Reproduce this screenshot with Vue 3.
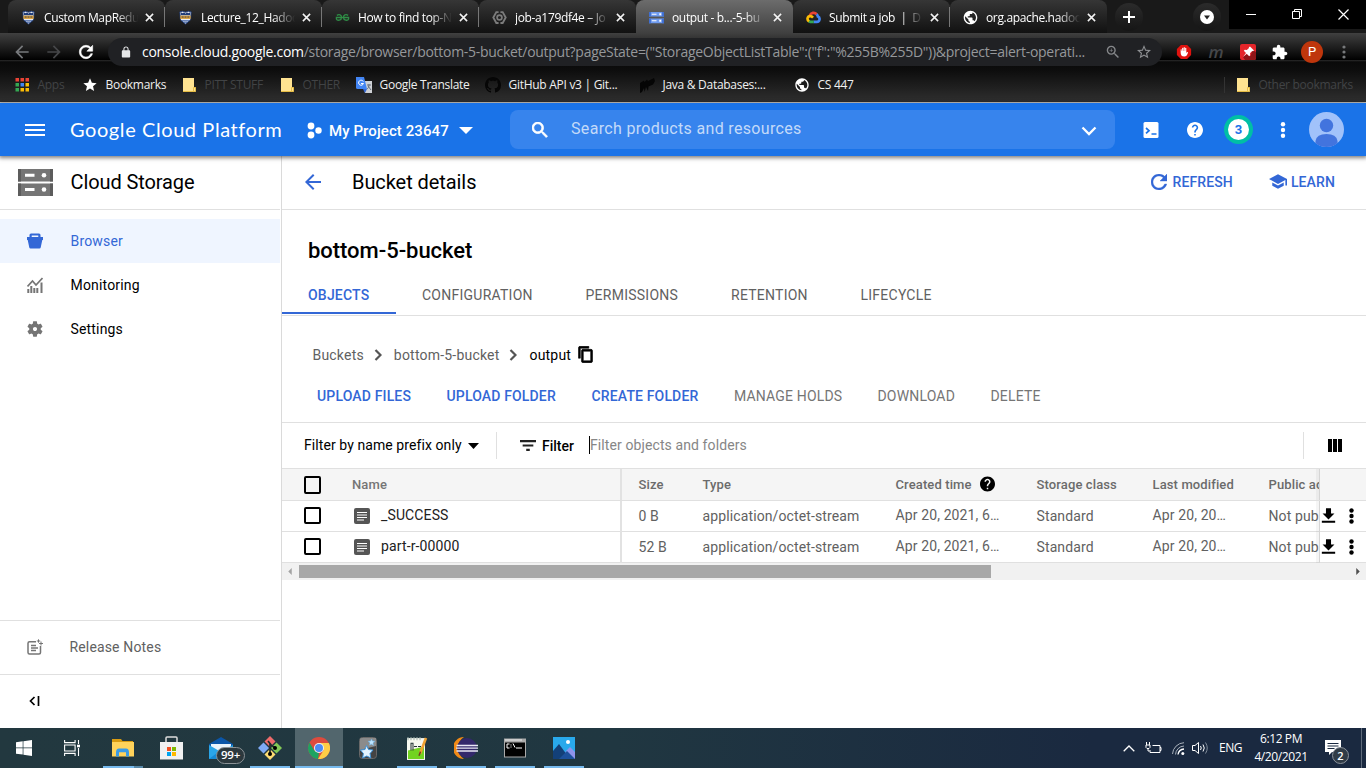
<script setup>
const icons = {
  menu: 'M3 18h18v-2H3v2zm0-5h18v-2H3v2zm0-7v2h18V6H3z',
  search: 'M15.5 14h-.79l-.28-.27C15.41 12.59 16 11.11 16 9.5 16 5.91 13.09 3 9.5 3S3 5.91 3 9.5 5.91 16 9.5 16c1.61 0 3.09-.59 4.23-1.57l.27.28v.79l5 4.99L20.49 19l-4.99-5zm-6 0C7.01 14 5 11.99 5 9.5S7.01 5 9.5 5 14 7.01 14 9.5 11.99 14 9.5 14z',
  zoom: 'M15.5 14h-.79l-.28-.27C15.41 12.59 16 11.11 16 9.5 16 5.91 13.09 3 9.5 3S3 5.91 3 9.5 5.91 16 9.5 16c1.61 0 3.09-.59 4.23-1.57l.27.28v.79l5 4.99L20.49 19l-4.99-5zm-6 0C7.01 14 5 11.99 5 9.5S7.01 5 9.5 5 14 7.01 14 9.5 11.99 14 9.5 14zM12 10h-2v2H9v-2H7V9h2V7h1v2h2v1z',
  help: 'M12 2C6.48 2 2 6.48 2 12s4.48 10 10 10 10-4.48 10-10S17.52 2 12 2zm1 17h-2v-2h2v2zm2.07-7.75l-.9.92C13.45 12.9 13 13.5 13 15h-2v-.5c0-1.1.45-2.1 1.17-2.83l1.24-1.26c.37-.36.59-.86.59-1.41 0-1.1-.9-2-2-2s-2 .9-2 2H8c0-2.21 1.79-4 4-4s4 1.79 4 4c0 .88-.36 1.68-.93 2.25z',
  back: 'M20 11H7.83l5.59-5.59L12 4l-8 8 8 8 1.41-1.41L7.83 13H20v-2z',
  forward: 'M12 4l-1.41 1.41L16.17 11H4v2h12.17l-5.58 5.59L12 20l8-8z',
  refresh: 'M17.65 6.35C16.2 4.9 14.21 4 12 4c-4.42 0-7.99 3.58-7.99 8s3.57 8 7.99 8c3.73 0 6.84-2.55 7.73-6h-2.08c-.82 2.33-3.04 4-5.65 4-3.31 0-6-2.69-6-6s2.69-6 6-6c1.66 0 3.14.69 4.22 1.78L13 11h7V4l-2.35 2.35z',
  school: 'M5 13.18v4L12 21l7-3.82v-4L12 17l-7-3.82zM12 3L1 9l11 6 9-4.91V17h2V9L12 3z',
  settings: 'M19.14 12.94c.04-.3.06-.61.06-.94 0-.32-.02-.64-.07-.94l2.03-1.58c.18-.14.23-.41.12-.61l-1.92-3.32c-.12-.22-.37-.29-.59-.22l-2.39.96c-.5-.38-1.03-.7-1.62-.94l-.36-2.54c-.04-.24-.24-.41-.48-.41h-3.84c-.24 0-.43.17-.47.41l-.36 2.54c-.59.24-1.13.57-1.62.94l-2.39-.96c-.22-.08-.47 0-.59.22L2.74 8.87c-.12.21-.08.47.12.61l2.03 1.58c-.05.3-.09.63-.09.94s.02.64.07.94l-2.03 1.58c-.18.14-.23.41-.12.61l1.92 3.32c.12.22.37.29.59.22l2.39-.96c.5.38 1.03.7 1.62.94l.36 2.54c.05.24.24.41.48.41h3.84c.24 0 .44-.17.47-.41l.36-2.54c.59-.24 1.13-.56 1.62-.94l2.39.96c.22.08.47 0 .59-.22l1.92-3.32c.12-.22.07-.47-.12-.61l-2.01-1.58zM12 14.6c-1.44 0-2.6-1.16-2.6-2.6s1.16-2.6 2.6-2.6 2.6 1.16 2.6 2.6-1.16 2.6-2.6 2.6z',
  filter: 'M10 18h4v-2.400h-4v2.400zM3 6v2.400h18V6H3zm3 7.200h12v-2.400H6v2.400z',
  download: 'M19.500 9.500H15.200V3H8.800v6.500H4.500l7.500 7.500 7.500-7.500zM3.500 18.500v2.500h17v-2.500z',
  copy: 'M16 1H4c-1.1 0-2 .9-2 2v14h2.500V3.500h11.500V1zm3 4H8c-1.1 0-2 .9-2 2v14c0 1.1.9 2 2 2h11c1.1 0 2-.9 2-2V7c0-1.1-.9-2-2-2zm-.5 15.500H8.500V7.500h10z',
  lock: 'M18 8h-1V6c0-2.76-2.24-5-5-5S7 3.24 7 6v2H6c-1.1 0-2 .9-2 2v10c0 1.1.9 2 2 2h12c1.1 0 2-.9 2-2V10c0-1.1-.9-2-2-2zM9 8V6c0-1.66 1.34-3 3-3s3 1.34 3 3v2H9z',
  starOutline: 'M22 9.24l-7.19-.62L12 2 9.19 8.63 2 9.24l5.46 4.73L5.82 21 12 17.27 18.18 21l-1.63-7.03L22 9.24zM12 15.4l-3.76 2.27 1-4.28-3.32-2.88 4.38-.38L12 6.1l1.71 4.04 4.38.38-3.32 2.88 1 4.28L12 15.4z',
  star: 'M12 17.27L18.18 21l-1.64-7.03L22 9.24l-7.19-.61L12 2 9.19 8.63 2 9.24l5.46 4.73L5.82 21z',
  puzzle: 'M20.5 11H19V7c0-1.1-.9-2-2-2h-4V3.5C13 2.12 11.88 1 10.5 1S8 2.12 8 3.5V5H4c-1.1 0-1.99.9-1.99 2v3.8H3.5c1.49 0 2.7 1.21 2.7 2.7s-1.21 2.7-2.7 2.7H2V20c0 1.1.9 2 2 2h3.8v-1.5c0-1.49 1.21-2.7 2.7-2.7 1.49 0 2.7 1.21 2.7 2.7V22H17c1.1 0 2-.9 2-2v-4h1.5c1.38 0 2.5-1.12 2.5-2.5S21.88 11 20.5 11z',
  globe: 'M12 2C6.48 2 2 6.48 2 12s4.48 10 10 10 10-4.48 10-10S17.52 2 12 2zm-1 17.93c-3.95-.49-7-3.85-7-7.93 0-.62.08-1.21.21-1.79L9 15v1c0 1.1.9 2 2 2v1.93zm6.9-2.54c-.26-.81-1-1.39-1.9-1.39h-1v-3c0-.55-.45-1-1-1H8v-2h2c.55 0 1-.45 1-1V7h2c1.1 0 2-.9 2-2v-.41c2.93 1.19 5 4.06 5 7.41 0 2.08-.8 3.97-2.1 5.39z',
  github: 'M12 0C5.37 0 0 5.37 0 12c0 5.31 3.435 9.795 8.205 11.385.6.105.825-.255.825-.57 0-.285-.015-1.23-.015-2.235-3.015.555-3.795-.735-4.035-1.41-.135-.345-.72-1.41-1.23-1.695-.42-.225-1.02-.78-.015-.795.945-.015 1.62.87 1.845 1.23 1.08 1.815 2.805 1.305 3.495.99.105-.78.42-1.305.765-1.605-2.67-.3-5.46-1.335-5.46-5.925 0-1.305.465-2.385 1.23-3.225-.12-.3-.54-1.53.12-3.18 0 0 1.005-.315 3.3 1.23.96-.27 1.98-.405 3-.405s2.04.135 3 .405c2.295-1.56 3.3-1.23 3.3-1.23.66 1.65.24 2.88.12 3.18.765.84 1.23 1.905 1.23 3.225 0 4.605-2.805 5.625-5.475 5.925.435.375.81 1.095.81 2.22 0 1.605-.015 2.895-.015 3.3 0 .315.225.69.825.57A12.02 12.02 0 0024 12c0-6.63-5.37-12-12-12z',
}

const tabs = [
  { icon: 'shield', title: 'Custom MapRedu' },
  { icon: 'shield', title: 'Lecture_12_Hadoo' },
  { icon: 'geeks', title: 'How to find top-N' },
  { icon: 'hex', title: 'job-a179df4e – Jo' },
  { icon: 'storage', title: 'output - b...-5-bu', active: true },
  { icon: 'cloud', title: 'Submit a job  |  D' },
  { icon: 'globe', title: 'org.apache.hadoo' },
]

const bookmarks = [
  { icon: 'apps', label: 'Apps', dim: true },
  { icon: 'star', label: 'Bookmarks' },
  { icon: 'folder', label: 'PITT STUFF', dim: true },
  { icon: 'folder', label: 'OTHER', dim: true },
  { icon: 'translate', label: 'Google Translate' },
  { icon: 'github', label: 'GitHub API v3 | Git...' },
  { icon: 'java', label: 'Java & Databases:...' },
  { icon: 'globe', label: 'CS 447' },
]

const appGrid = ['#ea4335', '#ea4335', '#ea4335', '#34a853', '#4285f4', '#fbbc05', '#34a853', '#fbbc05', '#fbbc05']
const sections = ['OBJECTS', 'CONFIGURATION', 'PERMISSIONS', 'RETENTION', 'LIFECYCLE']
const actions = [
  { label: 'UPLOAD FILES', on: true },
  { label: 'UPLOAD FOLDER', on: true },
  { label: 'CREATE FOLDER', on: true },
  { label: 'MANAGE HOLDS' },
  { label: 'DOWNLOAD' },
  { label: 'DELETE' },
]
const rows = [
  { name: '_SUCCESS', size: '0 B' },
  { name: 'part-r-00000', size: '52 B' },
]
</script>

<template>
  <div class="screen">
    <div class="tabstrip">
      <div v-for="(t, i) in tabs" :key="i" class="tab" :class="{ active: t.active, split: [0, 1, 2, 5].includes(i) }">
        <svg v-if="t.icon === 'shield'" class="fav" viewBox="0 0 16 16">
          <path d="M2 2l3-.7L8 2.3l3-1L14 2l-.6 8.5L8 15l-5.400-4.500z" fill="#e9ecf2" stroke="#223f7c" />
          <path d="M3 2.500l2 1 1.500-1L8 4l1.500-1.500 1.500 1 2-1-.2 3H3.200z" fill="#1f3c79" />
          <path d="M2.500 6h11v3.500h-11z" fill="#d79c35" /><path d="M4 7.500h2M7 7.500h2M10 7.500h2" stroke="#333c59" />
          <path d="M4 11.500h8M6 13h4" stroke="#2c5097" />
        </svg>
        <svg v-else-if="t.icon === 'geeks'" class="fav" viewBox="0 0 16 16" fill="none" stroke="#2f8d46" stroke-width="1.4">
          <path d="M2 5.700c2.500-1.800 5-.5 5 2.300 0 3-4.500 4-5.500 1.500V8h13v1.500C13.500 12 9 11 9 8c0-2.800 2.500-4.100 5-2.300" />
        </svg>
        <svg v-else-if="t.icon === 'hex'" class="fav" viewBox="0 0 16 16" fill="none" stroke="#7c7c7c">
          <path d="M7 2.200H4.600L1.400 8l3.200 5.800H7M9 2.200h2.400L14.600 8l-3.200 5.800H9" stroke-width="2" /><circle cx="8" cy="8" r="2.6" stroke-width="1.8" />
        </svg>
        <svg v-else-if="t.icon === 'storage'" class="fav" viewBox="0 0 16 16">
          <path fill="#6f9bef" d="M0 2h16v5H0zM0 9h16v5H0z" /><path fill="#3f6fd2" d="M0 2h2v5H0zM14 2h2v5h-2zM0 9h2v5H0zM14 9h2v5h-2z" />
          <path fill="#fff" d="M3 4h5v1H3zM3 11h5v1H3zM11 3.500h2v2h-2zM11 10.500h2v2h-2z" />
        </svg>
        <svg v-else-if="t.icon === 'cloud'" class="fav" viewBox="0 0 16 16" fill="none" stroke-width="2.8">
          <path stroke="#ea4335" d="M4 6a4.300 4.300 0 0 1 7.500-1.300" /><path stroke="#4285f4" d="M11.300 4.500C12.600 5.700 12.700 7 12.700 7c2.700 1 2.300 5.600-1.200 5.600H8" />
          <path stroke="#34a853" d="M8.200 12.600H4.500L2.800 12" /><path stroke="#fbbc05" d="M3.200 12.200C.5 10.300 1.500 6.500 4.500 6.500c1.500 0 2.300.8 3 1.600" />
        </svg>
        <svg v-else class="fav" viewBox="1 1 22 22" fill="#fff"><path :d="icons.globe" /></svg>
        <span class="tab-title">{{ t.title }}</span>
        <svg class="close" viewBox="0 0 10 10"><path d="M1 1l8 8M9 1L1 9" stroke="#f4f4f4" stroke-width="1.7" /></svg>
      </div>
      <div class="disc plus"><svg viewBox="0 0 12 12"><path d="M6 0v12M0 6h12" stroke="#fff" stroke-width="2" /></svg></div>
      <div class="disc chevron"><svg viewBox="0 0 14 14"><circle cx="7" cy="7" r="7" fill="#fff" /><path d="M4 5.500h6L7 9.500z" fill="#222" /></svg></div>
      <div class="winbtns">
        <svg viewBox="0 0 45 29"><path d="M17 14.500h10" stroke="#fff" /></svg>
        <svg viewBox="0 0 45 29" fill="none" stroke="#fff"><path d="M17.500 11.500h7v7h-7zM19.500 11V9.500h7v7H25" /></svg>
        <svg viewBox="0 0 45 29"><path d="M17.500 9.500l10 10M27.500 9.500l-10 10" stroke="#fff" stroke-width="1.2" /></svg>
      </div>
    </div>

    <div class="toolbar">
      <svg class="nav-ic" viewBox="0 0 24 24" fill="#77797c"><path :d="icons.back" /></svg>
      <svg class="nav-ic" viewBox="0 0 24 24" fill="#464749"><path :d="icons.forward" /></svg>
      <svg class="nav-ic" viewBox="0 0 24 24" fill="#fff" stroke="#fff" stroke-width=".7"><path :d="icons.refresh" /></svg>
      <div class="omnibox">
        <svg class="lock" viewBox="3 0 18 23" fill="#e5e6e8"><path :d="icons.lock" /></svg>
        <div class="url"><b>console.cloud.google.com</b>/storage/browser/bottom-5-bucket/output?pageState=("StorageObjectListTable":("f":"%255B%255D"))&amp;project=alert-operati...</div>
        <svg class="o-ic" viewBox="2 2 20 20" fill="#85878a"><path :d="icons.zoom" /></svg>
        <svg class="o-ic" viewBox="2 2 20 20" fill="#8e9093"><path :d="icons.starOutline" /></svg>
      </div>
      <div class="exts">
        <svg viewBox="0 0 18 18"><path d="M5.500 1h7L17 5.500v7L12.500 17h-7L1 12.500v-7z" fill="#e0120e" /><path d="M5.200 9V6.200q.7-.8 1.200 0V8h.5V4.500q.7-.8 1.300 0V8h.4V3.800q.7-.8 1.300 0V8h.4V4.600q.8-.7 1.300 0v5.400q1-1.500 2-.8c-.7 2.800-2 5-4.300 5-3 0-4.100-2-4.100-5.200z" fill="#fff" /></svg>
        <span class="m-ext">m</span>
        <svg viewBox="0 0 16 16"><rect width="16" height="16" rx="2" fill="#e5252a" /><path d="M3 13l4-3 3.500 2 2-6L16 8v6q0 2-2 2H5z" fill="#8f1518" /><path d="M10 2.500l4 4-1 .7-.8-.3-2.200 2.300.2 2-1 1-2.500-2.500L3 13l3-4L3.800 6.800l1-1 2 .2L9 4l-.2-.8z" fill="#fff" /></svg>
        <svg viewBox="1 0 23 23" fill="#fff"><path :d="icons.puzzle" /></svg>
        <span class="avatar-p">P</span>
        <svg class="dots3" viewBox="0 0 4 14" fill="#77797b"><circle cx="2" cy="2" r="1.6" /><circle cx="2" cy="7" r="1.6" /><circle cx="2" cy="12" r="1.6" /></svg>
      </div>
    </div>

    <div class="bookmarks">
      <div v-for="b in bookmarks" :key="b.label" class="bm" :class="{ dim: b.dim }">
        <svg v-if="b.icon === 'apps'" class="bi" viewBox="0 0 16 16"><rect v-for="(c, i) in appGrid" :key="i" :x="1.5 + (i % 3) * 5" :y="1 + Math.floor(i / 3) * 5" width="3.5" height="3.5" :fill="c" /></svg>
        <svg v-else-if="b.icon === 'folder'" class="bi" viewBox="0 0 16 16"><path d="M2 1h11v9h1.500v5H2z" fill="#ffe391" /><path d="M12.500 10.500v4h2v-4zM2 14.500h12" stroke="#e6bd46" fill="none" /></svg>
        <svg v-else-if="b.icon === 'translate'" class="bi" viewBox="0 0 16 16"><path d="M7 4h9v12H9z" fill="#cfd2d6" /><path d="M0 0h8l3 12H1.500Q0 12 0 10.500z" fill="#4285f4" /><path d="M7 12h4l-2 4z" fill="#3367d6" /><path d="M7.300 4.500a2.500 2.500 0 1 0 .2 2H5" stroke="#fff" fill="none" /><path d="M11 8h4M13 7v1c0 2-1 3.500-2 4M12 9l3 4" stroke="#666f7a" fill="none" /></svg>
        <svg v-else-if="b.icon === 'java'" class="bi" viewBox="0 0 16 16"><path d="M1 6l4-2.500.5 1.500L8 2.500 9 4l6-3 1 3-2 3.500-4.500 2L9 14l-2-4-1.500 5L5 11l-2 4-2 1z" fill="#050505" /></svg>
        <svg v-else class="bi" viewBox="0 0 24 24" :fill="b.icon === 'github' ? '#060606' : '#fff'"><path :d="icons[b.icon]" /></svg>
        <span>{{ b.label }}</span>
      </div>
      <div class="bm dim other">
        <svg class="bi" viewBox="0 0 16 16"><path d="M2 1h11v9h1.500v5H2z" fill="#ffe391" /><path d="M12.500 10.500v4h2v-4zM2 14.500h12" stroke="#e6bd46" fill="none" /></svg>
        <span>Other bookmarks</span>
      </div>
    </div>

    <header class="gcp">
      <svg class="burger" viewBox="3 5 18 14" preserveAspectRatio="none" fill="#fff"><path :d="icons.menu" /></svg>
      <div class="logo">Google <span>Cloud Platform</span></div>
      <svg class="proj-ic" viewBox="0 0 15 17" fill="#fff"><circle cx="4" cy="4" r="3.4" /><circle cx="11.500" cy="8.500" r="3.2" /><circle cx="4" cy="13" r="3.4" /></svg>
      <div class="project">My Project 23647</div>
      <svg class="caret" viewBox="0 0 14 7" fill="#fff"><path d="M0 0h14L7 7z" /></svg>
      <div class="search">
        <svg viewBox="3 3 18 18" fill="#fff" stroke="#fff" stroke-width=".8"><path :d="icons.search" /></svg>
        <span>Search products and resources</span>
        <svg viewBox="0 0 16 10" class="down" fill="none" stroke="#fff" stroke-width="2.3"><path d="M1.500 1.500L8 8l6.500-6.500" /></svg>
      </div>
      <div class="gcp-tools">
        <svg viewBox="0 0 15 16"><rect width="15" height="16" rx="1.5" fill="#fff" /><path d="M2.500 6l3 2.700-3 2.700M8 12h5" fill="none" stroke="#1a73e8" stroke-width="1.7" /></svg>
        <svg viewBox="2 2 20 20" fill="#fff"><path :d="icons.help" /></svg>
        <span class="count">3</span>
        <svg viewBox="0 0 16 16" fill="#fff"><circle cx="8" cy="2.200" r="2.2" /><circle cx="8" cy="8" r="2.2" /><circle cx="8" cy="13.800" r="2.2" /></svg>
        <svg class="user" viewBox="0 0 35 35"><circle cx="17.500" cy="17.500" r="17.500" fill="#a1c2fa" /><circle cx="17.500" cy="13.500" r="6.700" fill="#4274de" /><path d="M6.500 31v-2q1-7 11-7t11 7v2q-4 4-11 4t-11-4z" fill="#4274de" /></svg>
      </div>
    </header>

    <div class="body">
      <aside>
        <div class="product">
          <svg viewBox="0 0 35 27"><path fill="#757575" d="M0 0h35v12.500H0zM0 14.500h35V27H0z" /><path fill="#5c5c5c" d="M0 0h3v12.500H0zM32 0h3v12.500h-3zM0 14.500h3V27H0zM32 14.500h3V27h-3z" /><path fill="#fff" d="M7 4.700h9.500v3H7zM7 19h9.500v3H7z" /><circle cx="26" cy="6.200" r="2.3" fill="#fff" /><circle cx="26" cy="20.500" r="2.3" fill="#fff" /></svg>
          <span>Cloud Storage</span>
        </div>
        <nav>
          <div class="item sel"><svg viewBox="0 0 16 16" fill="#3367d6"><path fill-rule="evenodd" d="M0 4h2.500V2q0-1.500 1.500-1.500h8q1.500 0 1.500 1.500v2H16v3h-.7l-1.600 7.500q-.2 1-1.200 1h-9q-1 0-1.200-1L.7 7H0zm4.700 0h6.600V2.500H4.700z" /></svg>Browser</div>
          <div class="item"><svg viewBox="0 0 16 16"><path d="M1.300 16v-4M4.300 16V9M7.300 16v-5M10.300 16v-5M14.500 16V5.500" stroke="#757575" stroke-width="2" /><path d="M.5 9.500L5.500 4l3.500 4 6.500-7" stroke="#757575" stroke-width="1.7" fill="none" /></svg>Monitoring</div>
          <div class="item"><svg viewBox="2 2 20 20" fill="#757575"><path :d="icons.settings" /></svg>Settings</div>
        </nav>
        <div class="release">
          <svg viewBox="0 0 16 16" fill="none" stroke="#757575"><path d="M9 2.700H2.500q-1.500 0-1.500 1.500v9.300Q1 15 2.500 15H12q1.500 0 1.500-1.500V7" stroke-width="1.5" /><path d="M4 6.500h5M4 9h7M4 11.500h5" stroke-width="1.3" /><path d="M11.500.3v3.400M9.800 2h3.400M14 2.500v4M12 4.500h4" /></svg>
          <span>Release Notes</span>
        </div>
        <div class="collapse"><svg viewBox="0 0 11 10" fill="none" stroke="#000" stroke-width="1.7"><path d="M5.500 1L1.500 5l4 4M9.500 0v10" /></svg></div>
      </aside>

      <main>
        <div class="pagehead">
          <svg class="back" viewBox="3 3 18 18" fill="#3367d6"><path :d="icons.back" /></svg>
          <span class="ptitle">Bucket details</span>
          <div class="head-act"><svg viewBox="4 4 16 16" fill="#3367d6" stroke="#3367d6" stroke-width=".4"><path :d="icons.refresh" /></svg>REFRESH</div>
          <div class="head-act learn"><svg viewBox="1 3 22 18" fill="#3367d6"><path :d="icons.school" /></svg>LEARN</div>
        </div>
        <h1>bottom-5-bucket</h1>
        <div class="sections"><div v-for="(s, i) in sections" :key="s" :class="{ cur: i === 0 }">{{ s }}</div></div>
        <div class="crumbs">
          <span>Buckets</span>
          <svg class="sep" viewBox="0 0 8 12" fill="none" stroke="#555" stroke-width="2.2"><path d="M1.500 1l5 5-5 5" /></svg>
          <span>bottom-5-bucket</span>
          <svg class="sep" viewBox="0 0 8 12" fill="none" stroke="#555" stroke-width="2.2"><path d="M1.500 1l5 5-5 5" /></svg>
          <span class="here">output</span>
          <svg class="copy" viewBox="1.500 .5 20 23" stroke="#000" stroke-width=".8"><path :d="icons.copy" /></svg>
        </div>
        <div class="actions"><span v-for="a in actions" :key="a.label" :class="{ on: a.on }">{{ a.label }}</span></div>
        <div class="filterbar">
          <span class="prefix">Filter by name prefix only</span>
          <svg class="fcaret" viewBox="0 0 11 6"><path d="M0 0h11L5.500 6z" /></svg>
          <i class="rule"></i>
          <svg class="ficon" viewBox="3 6 18 12" preserveAspectRatio="none" fill="#222"><path :d="icons.filter" /></svg>
          <b>Filter</b>
          <span class="ph">Filter objects and folders</span>
          <i class="rule end"></i>
          <svg class="cols" viewBox="0 0 14 13"><path d="M0 0h4v13H0zM5 0h4v13H5zM10 0h4v13h-4z" /></svg>
        </div>
        <div class="table">
          <div class="tr th">
            <div class="name"><i class="cb"></i><span class="hname">Name</span></div>
            <div>Size</div><div>Type</div>
            <div>Created time<svg class="q" viewBox="2 2 20 20"><path :d="icons.help" /></svg></div>
            <div>Storage class</div><div>Last modified</div><div class="pub">Public ac</div><div class="acts"></div>
          </div>
          <div v-for="r in rows" :key="r.name" class="tr">
            <div class="name"><i class="cb"></i>
              <svg class="doc" viewBox="0 0 16 16"><rect width="16" height="16" rx="2" fill="#555" /><path d="M3 4.500h10M3 7h10M3 9.500h10M3 12h7" stroke="#fff" /></svg>
              <span class="fname">{{ r.name }}</span></div>
            <div>{{ r.size }}</div><div>application/octet-stream</div><div class="date">Apr 20, 2021, 6…</div><div>Standard</div><div class="date">Apr 20, 20…</div><div class="pub">Not pub</div>
            <div class="acts"><svg class="dl" viewBox="3 3 18 18"><path :d="icons.download" /></svg><svg class="more" viewBox="0 0 5 16"><circle cx="2.500" cy="2.500" r="2.2" /><circle cx="2.500" cy="8" r="2.2" /><circle cx="2.500" cy="13.500" r="2.2" /></svg></div>
          </div>
        </div>
        <div class="hscroll">
          <svg viewBox="0 0 4 8"><path d="M4 0v8L0 4z" fill="#a3a3a3" /></svg>
          <div class="thumb"></div>
          <svg viewBox="0 0 4 8"><path d="M0 0v8l4-4z" fill="#505050" /></svg>
        </div>
      </main>
    </div>

    <footer class="taskbar">
      <div class="tk win"><svg viewBox="0 0 16 16" fill="#fff"><path d="M0 2.300L6.700 1.300v6.300H0zM7.400 1.200L16 0v7.600H7.400zM0 8.300h6.700v6.300L0 13.700zM7.400 8.300H16V16l-8.600-1.200z" /></svg></div>
      <div class="tk view"><svg viewBox="0 0 16 16" fill="none" stroke="#fff" stroke-width="1.1"><path d="M.6 0v2.600h10.500V0M.6 5h10.500v6H.6zM.6 16v-2.600h10.500V16M14.500 0v4M14.500 8v8" /><path d="M13 6h3" stroke-width="2.6" /></svg></div>
      <div class="tk run multi"><svg class="w22" viewBox="0 0 22 18"><path d="M0 0h9l1.500 2H21v3H0z" fill="#d99c12" /><path d="M0 3h22v14.500H0z" fill="#ffd35b" /><path d="M4 17.500v-4q0-4 3-4h7q3 0 3 4v4h-3v-4.300H7v4.300z" fill="#3a9be6" /></svg></div>
      <div class="tk"><svg class="w23" viewBox="0 0 23 24"><path d="M6 7V2q0-1 1-1h9q1 0 1 1v5" fill="none" stroke="#ddd" stroke-width="1.5" /><path d="M0 6h23v17.500H0z" fill="#f1f1f1" /><path d="M7 11h4v4H7z" fill="#f25022" /><path d="M12 11h4v4h-4z" fill="#7fba00" /><path d="M7 16h4v4H7z" fill="#00a4ef" /><path d="M12 16h4v4h-4z" fill="#ffb900" /></svg></div>
      <div class="tk"><svg class="w24" viewBox="0 0 24 22"><path d="M0 7L12 0l12 7v3H0z" fill="#0b56a8" /><path d="M2 7h20v8H2z" fill="#e9f3fb" /><path d="M0 8l12 7 12-7v14H0z" fill="#2aa5e8" /><path d="M0 22l12-9 12 9z" fill="#1689d3" /></svg><span class="badge">99+</span></div>
      <div class="tk run"><svg class="w24" viewBox="0 0 24 24"><path d="M12 0l5.500 5.500L12 11 6.500 5.500z" fill="#ee6b6b" /><path d="M5.500 6.500L11 12l-5.500 5.500L0 12z" fill="#7eaaf5" /><path d="M18.500 6.500L24 12l-5.500 5.500L13 12z" fill="#83c957" /><path d="M12 13l5.500 5.500L12 24l-5.500-5.500z" fill="#ffdc72" /><path d="M10 5l4 5M12 7v11M14 10l4 2" stroke="#222b2b" stroke-width="1.7" /><circle cx="12" cy="18" r="2" /><circle cx="17" cy="12" r="2" /></svg></div>
      <div class="tk run hot"><svg class="w22" viewBox="0 0 22 22"><circle cx="11" cy="11" r="11" fill="#dd4b3e" /><path d="M1.500 5.500L6.300 13.500 11 16l-1 6A11 11 0 0 1 1.500 5.500z" fill="#1da362" /><path d="M11 6h9.800A11 11 0 0 1 10 22l5.500-8.500z" fill="#ffcd46" /><circle cx="11" cy="11" r="5" fill="#f1f1f1" /><circle cx="11" cy="11" r="4" fill="#4c8bf5" /></svg></div>
      <div class="tk"><svg class="w18" viewBox="0 0 18 22"><rect x=".5" y=".5" width="17" height="21" rx="3" fill="#444" stroke="#686868" /><path d="M1 2q0-1 2-1h14v8L1 13z" fill="#8b8b8b" /><path d="M7.500 8.500l2 4 4.500.5-3 3.500.8 4.500-4-2-4.200 2 .8-4.500-3-3.500 4.600-.5z" fill="#e4f4ff" stroke="#3f94da" /><path d="M12.500 2l1 2 2.500.3-2 1.700.5 2.500-2-1.300-2.200 1L11 6 9 4.300l2.500-.2z" fill="#bfe5ff" stroke="#64aee4" stroke-width=".5" /></svg></div>
      <div class="tk run"><svg class="w22 npp" viewBox="0 0 22 24" preserveAspectRatio="none"><path d="M1 2h18v21H1z" fill="#f6f8f0" /><path d="M2 14L18 10v12H2z" fill="#72d321" /><path d="M2 1v3M5 1v3M8 1v3M11 1v3M14 1v3" stroke="#9eb0aa" /><path d="M5 14V7h2v7M8 10h3M12 10h3" stroke="#233" fill="none" /><path d="M20 2l-6 15" stroke="#f0a132" stroke-width="2.6" /><path d="M14.500 15l-1.500 4" stroke="#70451d" stroke-width="1.5" /></svg></div>
      <div class="tk run"><svg class="w24" viewBox="0 0 24 22"><path d="M10 0A11 11 0 0 0 10 22 13 13 0 0 1 10 0z" fill="#f28a16" /><circle cx="13" cy="11" r="10" fill="#33286b" /><path d="M2.500 8.500H24M2 11.200h22M2.500 14H24" stroke="#e9e7f5" stroke-width="1.3" /></svg></div>
      <div class="tk run"><svg class="w22" viewBox="0 0 22 19"><path d="M0 0h22v19H0z" fill="#aaa" /><path d="M1 4h20v14H1z" fill="#020202" /><path d="M5.500 5.500H3v4h2.500M7 6v1M7 8v1M9 5l2 4M12 9.500h6" stroke="#fff" fill="none" /><path d="M1 1.500h17" stroke="#eee" /></svg></div>
      <div class="tk run"><svg class="w22" viewBox="0 0 22 22"><path d="M0 0h22v22H0z" fill="#29a9ec" /><path d="M13 14l4-4 5 5v7H9z" fill="#8f93eb" /><path d="M0 14l6-7 11 15H0z" fill="#134078" /><path d="M6 22l8-8 8 8z" fill="#1d519c" /><circle cx="15" cy="5" r="2" fill="#fff" /></svg></div>
      <div class="tray">
        <svg class="t1" viewBox="0 0 12 7" fill="none" stroke="#fff" stroke-width="1.3"><path d="M.7 6.300L6 1l5.300 5.300" /></svg>
        <svg class="t2" viewBox="0 0 16 13" fill="none" stroke="#fff"><path d="M7 3.500h7.500v7H4.500V8M14.500 5.500h1v3h-1M1 0v3M4 0v3M.5 3h4v2.500l-1 1h-2l-1-1zM2.500 6.500V9H4" /></svg>
        <svg class="t3" viewBox="0 0 13 13" fill="none"><path d="M.5 12A12 12 0 0 1 12 .7M3.500 12.500A9 9 0 0 1 12 4" stroke="#a9b1bb" /><path d="M6 12.500A6.500 6.500 0 0 1 12 7" stroke="#fff" stroke-width="1.3" /><circle cx="10.800" cy="11.500" r="1.5" fill="#fff" /></svg>
        <svg class="t4" viewBox="0 0 17 14" fill="none" stroke="#fff"><path d="M.5 4.500H3L6.500 1.500v11L3 9.500H.5zM8.500 5q1.500 2 0 4M11 3.500q2.500 3.500 0 7" /><path d="M13.500 1.500q3.500 5.500 0 11" stroke="#828d9b" /></svg>
        <span class="lang">ENG</span>
        <div class="clock"><div>6:12 PM</div><div>4/20/2021</div></div>
        <div class="notify"><svg viewBox="0 0 16 16"><path d="M0 0h16v12H7l-3 3v-3H0z" fill="#fff" /><path d="M2.500 3.500h11M2.500 6h11M2.500 8.500h7" stroke="#1b2a41" /></svg><span>2</span></div>
      </div>
    </footer>
  </div>
</template>

<style>
body { margin: 0; overflow: hidden; }
</style>

<style scoped>
* { box-sizing: border-box; }
svg { display: block; flex: none; }
.screen { width: 1366px; height: 768px; display: flex; flex-direction: column; overflow: hidden; font-family: Roboto, sans-serif; font-size: 14px; color: #000; background: #fff; white-space: nowrap; }
.tabstrip, .toolbar, .bookmarks, .taskbar { font-family: "Open Sans", "Noto Sans", sans-serif; }

.tabstrip { height: 33px; flex: none; display: flex; background: #191919; padding-left: 8px; }
.tab { width: 157px; height: 33px; flex: none; display: flex; align-items: center; padding: 1px 0 0 13px; background: linear-gradient(#363636, #111); border-radius: 8px 8px 0 0; position: relative; color: #fff; }
.tab.active { background: linear-gradient(#6c6c6c, #404040); }
.tab.split::after { content: ""; position: absolute; right: 0; top: 7px; width: 1px; height: 20px; background: #777; }
.fav { width: 15px; height: 15px; }
.tab-title { width: 96px; margin-left: 8px; font-size: 12px; letter-spacing: -.35px; white-space: pre; -webkit-mask-image: linear-gradient(90deg, #000 75%, transparent 98%); mask-image: linear-gradient(90deg, #000 75%, transparent 98%); }
.close { width: 9px; height: 9px; margin-left: 5px; }
.disc { width: 28px; height: 28px; margin-top: 3px; border-radius: 50%; background: linear-gradient(#2b2b2b, #151515); display: flex; align-items: center; justify-content: center; }
.plus { margin-left: 8px; }
.plus svg { width: 12px; height: 12px; }
.chevron { margin-left: 50px; }
.chevron svg { width: 14px; height: 14px; }
.winbtns { display: flex; height: 29px; margin-left: auto; background: #000; gap: 1px; }
.winbtns svg { width: 45px; height: 29px; }

.toolbar { height: 37px; flex: none; display: flex; align-items: center; padding-left: 12px; background: linear-gradient(#404040 0, #000 27px, #2b2b2b 27px, #090909 29px, #0d0d0d 37px); }
.nav-ic { width: 20px; height: 20px; margin: 0 12px 0 0; }
.omnibox { width: 1054px; height: 28px; margin: 5px 0 4px 0; border-radius: 14px; background: #202124; display: flex; align-items: center; padding-left: 13px; }
.exts { display: grid; grid-template-columns: repeat(6, 32px); align-items: center; justify-items: center; margin-left: 6px; }
.exts svg { width: 16px; height: 16px; }
.lock { width: 10px; height: 12px; }
.url { width: 946px; margin-left: 11px; margin-top: -2px; font-size: 14px; letter-spacing: -.285px; color: #96989b; }
.url b { font-weight: 400; color: #fff; }
.o-ic { width: 14px; height: 14px; margin-left: 17.5px; }
.m-ext { font-size: 17px; line-height: 20px; font-style: italic; font-weight: 600; color: #45474a; }
.avatar-p { width: 22px; height: 22px; border-radius: 50%; background: #bf360c; color: #fff; font: 13px/22px Roboto, sans-serif; text-align: center; }
.exts .dots3 { width: 4px; height: 14px; }

.bookmarks { height: 33px; flex: none; display: grid; grid-template-columns: 68px 99px 98px 77px 129px 154px 155px 430px 135px; align-items: center; padding: 0 0 4px 13.5px; background: linear-gradient(#0d0d0d, #2f2f2f 32px, #d5d2cd 32px); color: #f0f0f0; font-size: 12px; }
.bm { display: flex; align-items: center; gap: 8px; height: 26px; letter-spacing: -.28px; }
.bm span { margin-top: -1px; }
.bm.dim { color: #414345; }
.bi { width: 16px; height: 16px; }
.other { height: 16px; border-left: 1px solid #333; padding-left: 10px; }

.gcp { height: 53px; flex: none; background: #1a73e8; display: flex; align-items: center; padding-left: 25px; color: #fff; position: relative; box-shadow: 0 1px 4px 1px rgba(0, 0, 0, .5); z-index: 2; }
.burger { width: 20px; height: 14px; }
.logo { width: 212px; margin-left: 25px; margin-top: -2px; font: 20px/28px Lato, sans-serif; letter-spacing: .58px; }
.proj-ic { width: 15px; height: 17px; margin-left: 25px; margin-top: 1px; }
.project { width: 121px; margin-left: 7px; margin-top: 2px; font-size: 15px; font-weight: 500; letter-spacing: .09px; }
.caret { width: 14px; height: 7px; margin-left: 9px; margin-top: 2px; }
.search { width: 605px; height: 39px; margin-left: 37px; border-radius: 8px; background: #3784ed; display: flex; align-items: center; padding-left: 22px; color: #c3daf9; font-size: 16px; }
.search svg { width: 16px; height: 16px; }
.search span { margin-left: 23px; margin-top: -3px; letter-spacing: .33px; font-weight: 450; }
.search .down { height: 10px; margin-left: auto; margin-right: 18px; margin-top: 3px; }
.gcp-tools { display: grid; grid-template-columns: repeat(4, 44px) 44px; align-items: center; justify-items: center; margin-left: 13.5px; }
.gcp-tools svg { width: 16px; height: 16px; }
.gcp-tools .user { width: 35px; height: 35px; }
.count { width: 29px; height: 29px; border: 4px solid #00bfa5; border-radius: 50%; background: #fff; color: #1a73e8; font-size: 13px; font-weight: 700; line-height: 22px; text-align: center; }

.body { flex: 1; display: flex; min-height: 0; }
aside { width: 282px; flex: none; border-right: 1px solid #dadada; display: flex; flex-direction: column; padding-right: 1px; }
.product { height: 54px; border-bottom: 1px solid #e0e0e0; display: flex; align-items: center; padding-left: 18px; font-size: 20px; }
.product svg { width: 35px; height: 27px; }
.product span { margin-left: 17.5px; margin-top: -2px; letter-spacing: -.1px; }
nav { flex: 1; padding-top: 9px; }
.item { height: 44px; display: flex; align-items: center; padding-left: 27px; letter-spacing: .17px; }
.item svg { width: 16px; height: 16px; margin-right: 27.5px; }
.item.sel { background: #eff5ff; color: #3367d6; }
.release { height: 55px; border: solid #e0e0e0; border-width: 1px 0; display: flex; align-items: center; padding: 0 0 1px 27px; color: #616161; }
.release svg { width: 16px; height: 16px; }
.release span { margin-left: 26.5px; margin-top: -1px; letter-spacing: .15px; }
.collapse { height: 53px; display: flex; align-items: center; padding: 0 0 1px 28.5px; }
.collapse svg { width: 11px; height: 10px; }

main { flex: 1; min-width: 0; display: flex; flex-direction: column; }
.pagehead { height: 54px; flex: none; border-bottom: 1px solid #e0e0e0; display: flex; align-items: center; padding: 0 31px 2px 21.5px; }
.back { width: 18px; height: 18px; }
.ptitle { margin-left: 30.5px; margin-right: auto; font-size: 20px; letter-spacing: -.07px; }
.head-act { display: flex; align-items: center; gap: 5px; color: #3367d6; font-weight: 500; letter-spacing: .12px; }
.head-act svg { width: 16px; height: 16px; }
.head-act.learn { margin-left: 36px; gap: 4px; }
.learn svg { width: 18px; height: 15px; }
h1 { margin: 0; height: 66px; flex: none; padding: 27px 0 0 26px; font-size: 22px; line-height: 28px; font-weight: 500; letter-spacing: -.03px; }
.sections { height: 40px; flex: none; border-bottom: 1px solid #e0e0e0; display: grid; grid-template-columns: 114px 163.5px 145.5px 129.5px 123px; color: #616161; font-weight: 450; letter-spacing: .25px; }
.sections div { height: 38px; line-height: 38px; padding-left: 26px; }
.sections .cur { color: #3367d6; border-bottom: 2px solid #3367d6; font-weight: 500; letter-spacing: .2px; }
.crumbs { height: 59px; flex: none; display: flex; align-items: center; padding: 18px 0 0 30.5px; color: #616161; letter-spacing: .2px; }
.sep { width: 8px; height: 12px; margin: 0 12px 0 10px; }
.crumbs .here { color: #000; }
.copy { width: 15px; height: 17px; margin-left: 7px; }
.actions { height: 48px; flex: none; border-bottom: 1px solid #e0e0e0; display: grid; grid-template-columns: 129.5px 145px 142.5px 143.5px 113px 80px; align-items: center; padding: 0 0 5px 35px; color: #757575; font-weight: 450; letter-spacing: .17px; }
.actions .on { color: #3367d6; font-weight: 500; letter-spacing: .15px; }
.filterbar { height: 45px; flex: none; display: flex; align-items: center; padding-left: 22px; }
.prefix { width: 158px; margin-top: -2px; letter-spacing: .08px; }
.fcaret { width: 11px; height: 6px; margin-left: 5.5px; }
.rule { width: 1px; height: 27px; background: #e0e0e0; margin-left: 17.5px; }
.ficon { width: 16px; height: 11px; margin-left: 23px; }
.filterbar b { font-weight: 500; margin-left: 6px; width: 33px; }
.ph { margin-left: 14px; color: #868686; border-left: 1px solid #000; letter-spacing: .1px; line-height: 18px; position: relative; top: -1px; }
.rule.end { margin-left: auto; }
.cols { width: 14px; height: 13px; margin: 0 24px; }
.table { border-top: 1px solid #e0e0e0; }
.tr { height: 31px; display: grid; grid-template-columns: 340px 64px 193px 141px 116px 116px 68px 46px; border-bottom: 1px solid #e0e0e0; line-height: 31px; color: #616161; }
.tr > div { padding-left: 16.5px; letter-spacing: .12px; position: relative; }
.tr > div.date { line-height: 29px; }
.tr > .name { display: flex; align-items: center; padding: 0 0 2px 22px; border-right: 2px solid #e2e2e2; color: #212121; letter-spacing: .13px; line-height: 28px; }
.fname { position: relative; top: -1px; }
.tr > .pub { overflow: hidden; border-right: 1px solid #d5d5d5; box-shadow: inset -3px 0 rgba(0, 0, 0, .04); }
.cb { width: 17px; height: 17px; border: 2px solid #000; border-radius: 2px; flex: none; }
.doc { width: 16px; height: 16px; margin: 0 11px 0 33px; }
.tr.th { height: 32px; background: #f5f5f5; color: #6b6b6b; font-size: 13px; font-weight: 500; }
.th > .name { padding-bottom: 0; }
.th .cb { height: 18px; }
.th .hname { margin-left: 31px; color: #757575; }
.q { position: absolute; left: 101px; top: 7px; width: 15px; height: 16px; }
.tr > .acts { padding: 0 0 2px 2px; display: flex; align-items: center; }
.dl { width: 13px; height: 17px; transform: scale(1.1); }
.more { width: 5px; height: 16px; margin-left: 14px; }
.hscroll { height: 17px; background: #f1f1f1; display: flex; align-items: center; padding: 0 6px 0 6px; }
.hscroll svg { width: 4px; height: 7px; }
.thumb { width: 692px; height: 13px; background: #a8a8a8; margin: 0 auto 0 7px; }

.taskbar { height: 40px; flex: none; display: flex; background: linear-gradient(90deg, #22383f, #203741 45%, #1a2940 80%); color: #fff; }
.tk { width: 49px; height: 40px; flex: none; display: flex; align-items: center; justify-content: center; position: relative; }
.tk svg { width: 16px; height: 16px; }
.tk.win { padding-right: 2px; }
.tk.view { padding-right: 3px; }
.tk .w18 { width: 18px; height: 22px; }
.tk .w22 { width: 22px; height: 22px; }
.tk .npp { height: 25px; }
.tk .w23 { width: 23px; height: 24px; }
.tk .w24 { width: 24px; height: 24px; }
.tk.run::after { content: ""; position: absolute; left: 5px; right: 4px; bottom: 0; height: 2px; background: #76b9ed; }
.tk.hot { background: linear-gradient(90deg, transparent 1px, #52666d 1px); }
.tk.hot::after { left: 1px; right: 0; }
.tk.multi::after { background: linear-gradient(90deg, #76b9ed 78%, #5788a8 78%); }
.badge { position: absolute; left: 20px; top: 19px; width: 29px; height: 17px; border: 1px solid #8b9296; border-radius: 9px; background: #2c383d; font-size: 11.5px; font-weight: 600; line-height: 14px; text-align: center; letter-spacing: -.3px; }
.tray { margin-left: auto; width: 243px; display: flex; align-items: center; position: relative; }
.t1 { width: 12px; height: 7px; }
.t2 { width: 17px; height: 13px; margin-left: 10px; }
.t3 { width: 13px; height: 13px; margin-left: 10px; }
.t4 { width: 17px; height: 14px; margin-left: 7px; }
.lang { width: 24px; margin-left: 10px; margin-top: -1px; font-size: 12px; letter-spacing: -.5px; }
.clock { width: 64px; margin-left: 6px; margin-top: -1px; font-size: 12px; line-height: 18px; letter-spacing: -.4px; text-align: center; }
.notify { position: relative; margin-left: 12px; }
.notify svg { width: 16px; height: 16px; }
.notify span { position: absolute; left: 7px; top: 7px; width: 17px; height: 17px; border: 1px solid #8b929b; border-radius: 50%; background: #303b46; font-size: 11px; font-weight: 600; line-height: 15px; text-align: center; }
.tray::after { content: ""; position: absolute; right: 4px; top: 0; width: 1px; height: 40px; background: #5f6b7b; }
</style>
